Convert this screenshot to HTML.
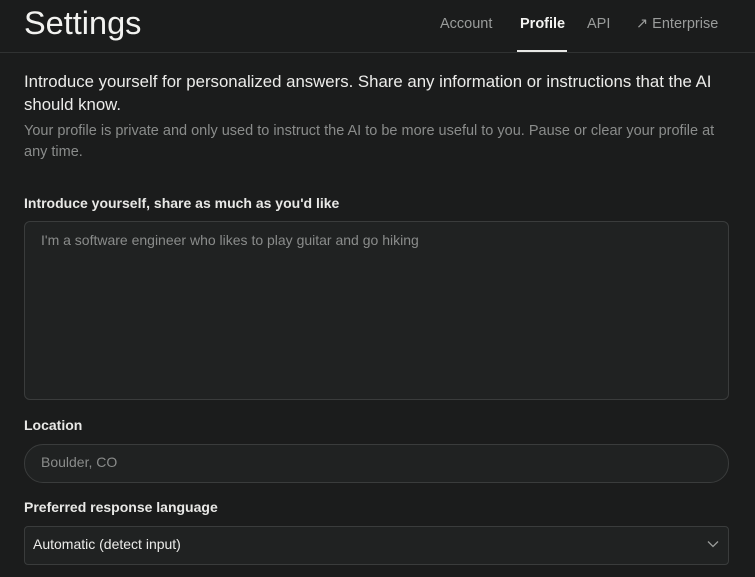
<!DOCTYPE html><html><head><style>
body{margin:0;width:755px;height:577px;background:#1b1c1c;font-family:"Liberation Sans",sans-serif;overflow:hidden;position:relative;color:#e8e8e6}
.a{position:absolute;white-space:nowrap}
</style></head><body>
<div class="a" style="left:24px;top:5px;font-size:32.5px;color:#f2f2f0">Settings</div>
<div class="a" style="left:440px;top:16px;font-size:14.5px;color:#9a9c9b">Account</div>
<div class="a" style="left:520px;top:16px;font-size:14.5px;color:#f4f4f2;font-weight:bold">Profile</div>
<div class="a" style="left:587px;top:16px;font-size:14.5px;color:#9a9c9b">API</div>
<div class="a" style="left:636px;top:16px;font-size:14.5px;color:#9a9c9b">↗ Enterprise</div>
<div class="a" style="left:0;top:52px;width:755px;height:1px;background:#303232"></div>
<div class="a" style="left:517px;top:50px;width:50px;height:2px;background:#e8e8e6"></div>
<div class="a" style="left:24px;top:70px;font-size:16.8px;line-height:23px;color:#ececea">Introduce yourself for personalized answers. Share any information or instructions that the AI<br>should know.</div>
<div class="a" style="left:24px;top:121px;font-size:14.5px;line-height:21px;color:#8a8c8b">Your profile is private and only used to instruct the AI to be more useful to you. Pause or clear your profile at<br>any time.</div>
<div class="a" style="left:24px;top:195px;font-size:14px;font-weight:bold">Introduce yourself, share as much as you'd like</div>
<div class="a" style="left:24px;top:221px;width:703px;height:177px;border:1px solid #3a3c3c;border-radius:6px;background:#202222"></div>
<div class="a" style="left:41px;top:232px;font-size:14px;color:#8a8c8b">I'm a software engineer who likes to play guitar and go hiking</div>
<div class="a" style="left:24px;top:417px;font-size:14px;font-weight:bold">Location</div>
<div class="a" style="left:24px;top:444px;width:703px;height:37px;border:1px solid #3a3c3c;border-radius:19px;background:#202222"></div>
<div class="a" style="left:41px;top:454px;font-size:14px;color:#8a8c8b">Boulder, CO</div>
<div class="a" style="left:24px;top:499px;font-size:14px;font-weight:bold">Preferred response language</div>
<div class="a" style="left:24px;top:526px;width:703px;height:37px;border:1px solid #3a3c3c;border-radius:4px;background:#202222"></div>
<div class="a" style="left:33px;top:536px;font-size:14px;color:#ececea">Automatic (detect input)</div>
<svg class="a" style="left:706px;top:539px" width="14" height="10" viewBox="0 0 14 10"><path d="M2 2.5L7 7.5L12 2.5" fill="none" stroke="#9a9c9b" stroke-width="1.3"/></svg>
</body></html>
